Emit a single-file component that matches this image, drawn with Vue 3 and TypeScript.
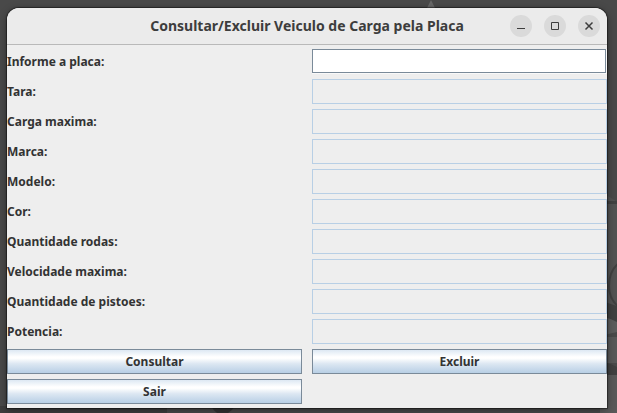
<script setup lang="ts">
import { reactive } from 'vue'

interface Field {
  id: string
  label: string
  editable: boolean
}

const fields: Field[] = [
  { id: 'placa', label: 'Informe a placa:', editable: true },
  { id: 'tara', label: 'Tara:', editable: false },
  { id: 'carga', label: 'Carga maxima:', editable: false },
  { id: 'marca', label: 'Marca:', editable: false },
  { id: 'modelo', label: 'Modelo:', editable: false },
  { id: 'cor', label: 'Cor:', editable: false },
  { id: 'rodas', label: 'Quantidade rodas:', editable: false },
  { id: 'velocidade', label: 'Velocidade maxima:', editable: false },
  { id: 'pistoes', label: 'Quantidade de pistoes:', editable: false },
  { id: 'potencia', label: 'Potencia:', editable: false },
]

const values = reactive<Record<string, string>>(
  Object.fromEntries(fields.map((f) => [f.id, ''])),
)

function clearAll(): void {
  for (const f of fields) values[f.id] = ''
}
</script>

<template>
  <div class="desktop">
    <svg class="wallpaper" viewBox="0 0 617 413" preserveAspectRatio="none" aria-hidden="true">
      <path d="M427 8L431 0L435 8Z" fill="#686868" />
      <path d="M600 192Q609 196 617 202V332Q610 332 600 328Z" fill="#525252" />
      <path d="M600 201H617V204H600Z" fill="#414141" />
      <path d="M620 262Q609 270 609 286Q609 300 620 308" fill="none" stroke="#404040" stroke-width="2" />
      <path d="M600 299Q608 304 617 306V323H600Z" fill="#404040" />
      <path d="M600 316Q609 318 617 322V332L600 336Z" fill="#5c5c5c" />
      <path d="M600 337H617V363H600Z" fill="#585858" />
      <path d="M600 361Q609 363 617 367V376H600Z" fill="#404040" />
      <path d="M600 375H617V413H600Z" fill="#595959" />
      <path d="M0 406H167V413H0Z" fill="#3d3d3d" />
      <path d="M211 406H235Q232 411 228 413H217Q213 410 211 406Z" fill="#323232" />
    </svg>

    <main class="window">
      <header class="titlebar">
        <h1 class="title">Consultar/Excluir Veiculo de Carga pela Placa</h1>
        <div class="controls">
          <button class="control" type="button" aria-label="Minimizar">
            <svg viewBox="0 0 22 22"><path d="M7 13.5H15" /></svg>
          </button>
          <button class="control" type="button" aria-label="Maximizar">
            <svg viewBox="0 0 22 22"><path d="M7.5 7.5H14.5V14.5H7.5Z" /></svg>
          </button>
          <button class="control" type="button" aria-label="Fechar">
            <svg viewBox="0 0 22 22"><path class="cross" d="M7.5 7.5L14.5 14.5M14.5 7.5L7.5 14.5" /></svg>
          </button>
        </div>
      </header>

      <form class="form" @submit.prevent>
        <template v-for="field in fields" :key="field.id">
          <label class="label" :for="field.id">{{ field.label }}</label>
          <div class="cell" :class="{ editable: field.editable }">
            <input
              :id="field.id"
              v-model="values[field.id]"
              class="input"
              type="text"
              autocomplete="off"
              :disabled="!field.editable"
            />
          </div>
        </template>
        <button class="action" type="submit">Consultar</button>
        <button class="action" type="button" @click="clearAll">Excluir</button>
        <button class="action" type="button">Sair</button>
      </form>
    </main>
  </div>
</template>

<style>
body {
  margin: 0;
}
</style>

<style scoped>
.desktop {
  position: relative;
  box-sizing: border-box;
  display: flex;
  min-height: 100vh;
  padding: 8px 10px 5px 7px;
  overflow: hidden;
  background: #494949;
  font-family: "Noto Sans", "Open Sans", sans-serif;
}

.wallpaper {
  position: absolute;
  inset: 0;
  width: 100%;
  height: 100%;
}

.window {
  position: relative;
  display: flex;
  flex: 1;
  flex-direction: column;
  border-radius: 12px 12px 0 0;
  background: #eeeeee;
  box-shadow: 0 0 1px 1px rgba(0, 0, 0, 0.45), 0 2px 8px rgba(0, 0, 0, 0.4);
}

.titlebar {
  display: grid;
  grid-template-columns: 1fr auto 1fr;
  align-items: center;
  height: 36px;
  border-bottom: 1px solid #b9b9b9;
  border-radius: 12px 12px 0 0;
  background: #ebebeb;
}

.title {
  grid-column: 2;
  margin: 0;
  color: #3d3d3d;
  font-family: "Noto Sans", sans-serif;
  font-size: 14px;
  font-weight: 700;
  line-height: 20px;
  white-space: nowrap;
}

.controls {
  display: flex;
  justify-content: flex-end;
  gap: 12px;
  padding-right: 7px;
}

.control {
  width: 22px;
  height: 22px;
  padding: 0;
  border: 0;
  border-radius: 50%;
  background: #dadada;
}

.control svg {
  display: block;
  width: 22px;
  height: 22px;
  fill: none;
  stroke: #3d3d3d;
  stroke-width: 1;
}

.control .cross {
  stroke-width: 1.5;
}

.form {
  display: grid;
  grid-template-columns: 1fr 1fr;
  grid-auto-rows: 25px;
  gap: 5px 10px;
  padding: 4px 0;
}

.label {
  color: #333333;
  font-size: 12px;
  font-weight: 700;
  line-height: 25px;
}

.cell {
  display: flex;
}

.cell.editable {
  padding: 0 1px 1px 0;
  background: #f9f9f9;
}

.input {
  box-sizing: border-box;
  flex: 1;
  min-width: 0;
  padding: 0 3px;
  border: 1px solid #b8cfe5;
  border-radius: 0;
  outline: 0;
  background: #eeeeee;
  color: #333333;
  font-family: inherit;
  font-size: 12px;
}

.editable .input {
  border-color: #7a8a99;
  background: #ffffff;
}

.action {
  padding: 0;
  border: 1px solid #7a8a99;
  border-radius: 0;
  background: linear-gradient(#dde8f3 0%, #ffffff 30%, #ffffff 36%, #dce7f2 60%, #b8cfe5 100%);
  color: #333333;
  font-family: inherit;
  font-size: 12px;
  font-weight: 700;
  line-height: 23px;
}
</style>
